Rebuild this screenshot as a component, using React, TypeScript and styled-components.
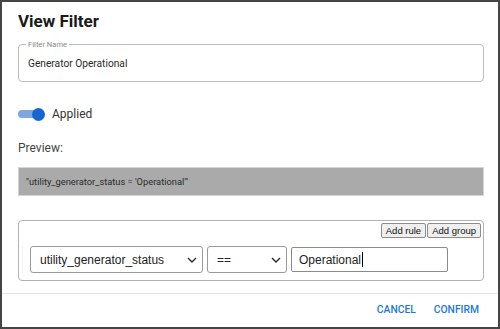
import styled, { createGlobalStyle } from 'styled-components';

const Global = createGlobalStyle`
  html, body { margin: 0; padding: 0; background: #fff; }
  * { box-sizing: border-box; }
`;

const Dialog = styled.div`
  width: 500px;
  height: 329px;
  border: 2px solid #454545;
  background: #fff;
  display: flex;
  flex-direction: column;
  font-family: Roboto, "Liberation Sans", sans-serif;
  color: #222;
`;

const Content = styled.div`
  padding: 9px 14px 0 16px;
  display: flex;
  flex-direction: column;
`;

const Title = styled.h2`
  margin: 0;
  font-size: 17px;
  line-height: 20px;
  font-weight: 700;
  color: #1b1b1b;
`;

const Field = styled.div`
  position: relative;
  margin-top: 13px;
  height: 38px;
  border: 1px solid #bcbcbc;
  border-radius: 4px;
  display: flex;
  align-items: center;
  padding-left: 9px;
  font-size: 10.2px;
  color: #2a2a2a;
`;

const FieldLabel = styled.span`
  position: absolute;
  top: -5px;
  left: 7px;
  padding: 0 2px;
  background: #fff;
  font-size: 7.6px;
  line-height: 9px;
  color: #8a8a8a;
`;

const SwitchRow = styled.div`
  margin-top: 22px;
  height: 20px;
  display: flex;
  align-items: center;
  gap: 7px;
  font-size: 12px;
  color: #333;
`;

const Switch = styled.span`
  position: relative;
  width: 27px;
  height: 13px;
  display: flex;
  align-items: center;
`;

const Track = styled.span`
  width: 23px;
  height: 8px;
  border-radius: 4px;
  background: #7fa7df;
`;

const Thumb = styled.span`
  position: absolute;
  right: 0;
  top: 0;
  width: 13px;
  height: 13px;
  border-radius: 50%;
  background: #1766d0;
`;

const PreviewLabel = styled.div`
  margin-top: 16px;
  font-size: 12px;
  line-height: 16px;
  color: #444;
`;

const PreviewBox = styled.div`
  margin-top: 11px;
  height: 29px;
  background: #aaaaaa;
  border: 1px solid #d4d4d4;
  display: flex;
  align-items: center;
  padding-left: 7px;
  font-size: 9.3px;
  color: #2b2b2b;
`;

const Builder = styled.div`
  margin-top: 24px;
  height: 61px;
  border: 1px solid #b2b2b2;
  border-radius: 4px;
  padding: 2px 2px 0 3px;
  display: flex;
  flex-direction: column;
`;

const BuilderHeader = styled.div`
  display: flex;
  justify-content: flex-end;
  gap: 1px;
`;

const SmallButton = styled.button`
  height: 15px;
  padding: 0 4px;
  background: #efefef;
  border: 1px solid #8c8c8c;
  border-radius: 2px;
  font-family: "Liberation Sans", Arial, sans-serif;
  font-size: 9.5px;
  color: #111;
  line-height: 13px;
`;

const Rule = styled.div`
  margin-top: 8px;
  display: flex;
  align-items: center;
  gap: 4px;
  border-left: 1px solid #efefef;
  padding-left: 7px;
`;

const Select = styled.div<{ $w: number }>`
  width: ${p => p.$w}px;
  height: 27px;
  border: 1px solid #9a9a9a;
  border-radius: 3px;
  display: flex;
  align-items: center;
  justify-content: space-between;
  padding: 0 5px 0 9px;
  font-family: "Liberation Sans", Arial, sans-serif;
  font-size: 12px;
  color: #222;
`;

const Input = styled.div`
  width: 157px;
  height: 25px;
  border: 1px solid #8a8a8a;
  border-radius: 2px;
  display: flex;
  align-items: center;
  padding-left: 7px;
  font-family: "Liberation Sans", Arial, sans-serif;
  font-size: 12px;
  color: #222;
`;

const Caret = styled.span`
  width: 1px;
  height: 15px;
  margin-left: 1px;
  background: #000;
`;

const Divider = styled.div`
  margin-top: 12px;
  height: 1px;
  background: #e4e4e4;
`;

const Actions = styled.div`
  flex: 1;
  display: flex;
  justify-content: flex-end;
  align-items: center;
  gap: 18px;
  padding: 0 19px 2px 0;
`;

const ActionButton = styled.button`
  border: 0;
  background: none;
  padding: 0;
  font-family: Roboto, sans-serif;
  font-weight: 500;
  font-size: 10.3px;
  letter-spacing: 0;
  color: #1e78d6;
`;

function Chevron() {
  return (
    <svg width="10" height="6" viewBox="0 0 10 6" fill="none">
      <path d="M1 1l4 4 4-4" stroke="#2a2a2a" strokeWidth="1.4" />
    </svg>
  );
}

export default function App() {
  return (
    <>
      <Global />
      <Dialog>
        <Content>
          <Title>View Filter</Title>
          <Field>
            <FieldLabel>Filter Name</FieldLabel>
            Generator Operational
          </Field>
          <SwitchRow>
            <Switch>
              <Track />
              <Thumb />
            </Switch>
            Applied
          </SwitchRow>
          <PreviewLabel>Preview:</PreviewLabel>
          <PreviewBox>"utility_generator_status = 'Operational'"</PreviewBox>
          <Builder>
            <BuilderHeader>
              <SmallButton>Add rule</SmallButton>
              <SmallButton>Add group</SmallButton>
            </BuilderHeader>
            <Rule>
              <Select $w={173}>
                utility_generator_status
                <Chevron />
              </Select>
              <Select $w={80}>
                ==
                <Chevron />
              </Select>
              <Input>
                Operational
                <Caret />
              </Input>
            </Rule>
          </Builder>
        </Content>
        <Divider />
        <Actions>
          <ActionButton>CANCEL</ActionButton>
          <ActionButton>CONFIRM</ActionButton>
        </Actions>
      </Dialog>
    </>
  );
}
